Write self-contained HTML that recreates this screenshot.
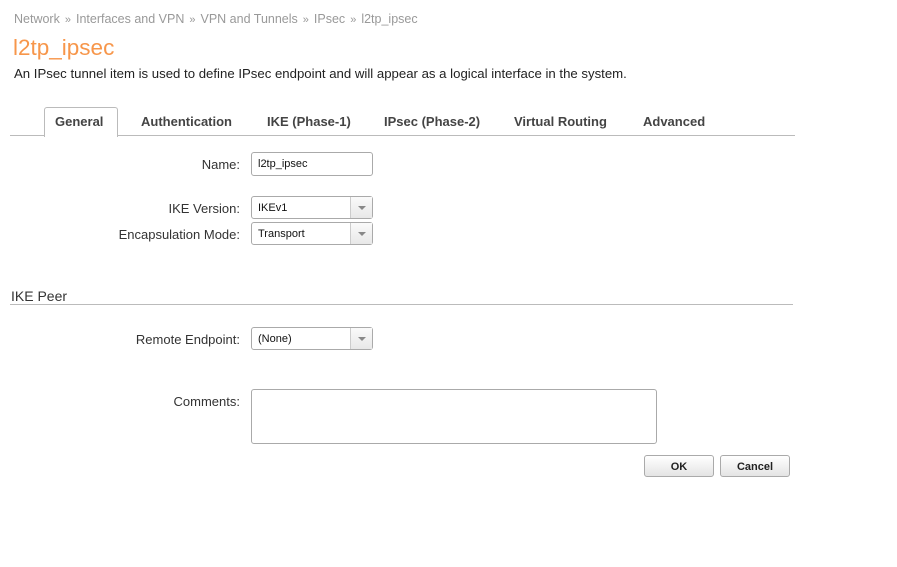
<!DOCTYPE html>
<html><head><style>
body{margin:0;width:897px;height:567px;background:#fff;font-family:"Liberation Sans",sans-serif;position:relative;overflow:hidden}
.a{position:absolute;white-space:nowrap}
.bc{top:12px;left:14px;font-size:12.5px;color:#999}
.bc span{color:#999;margin:0 5px;font-size:11px}
h1{position:absolute;margin:0;top:35px;left:13px;font-size:22.5px;font-weight:normal;color:#f7964a}
.desc{top:66px;left:14px;font-size:13.2px;color:#222}
.tabs{position:absolute;top:135px;left:10px;width:785px;border-top:1px solid #bbb}
.tab{position:absolute;top:114px;font-size:13px;font-weight:bold;color:#444}
.gen{position:absolute;left:44px;top:107px;width:72px;height:29px;border:1px solid #bbb;border-bottom:none;border-radius:3px 3px 0 0;background:#fff}
.lbl{font-size:13px;color:#333;text-align:right;width:240px;left:0}
.in{position:absolute;border:1px solid #aaa;border-radius:3px;background:#fff;font-size:11px;color:#111;box-sizing:border-box;padding-left:6px;line-height:22px}
.sel{height:23px;width:122px;left:251px}
.sel:after{content:"";position:absolute;right:0;top:0;width:21px;height:21px;border-left:1px solid #ccc;background:linear-gradient(#fafafa,#e8e8e8)}
.sel i{position:absolute;right:6px;top:9px;border:4px solid transparent;border-top:4px solid #888;z-index:2}
.btn{position:absolute;top:455px;height:22px;border:1px solid #aaa;border-radius:3px;background:linear-gradient(#fff,#e4e4e4);font-size:11px;font-weight:bold;text-align:center;line-height:22px;color:#222;box-sizing:border-box}
</style></head><body>
<div class="a bc">Network<span>»</span>Interfaces and VPN<span>»</span>VPN and Tunnels<span>»</span>IPsec<span>»</span>l2tp_ipsec</div>
<h1>l2tp_ipsec</h1>
<div class="a desc">An IPsec tunnel item is used to define IPsec endpoint and will appear as a logical interface in the system.</div>
<div class="tabs"></div>
<div class="gen"></div>
<div class="a tab" style="left:55px">General</div>
<div class="a tab" style="left:141px">Authentication</div>
<div class="a tab" style="left:267px">IKE (Phase-1)</div>
<div class="a tab" style="left:384px">IPsec (Phase-2)</div>
<div class="a tab" style="left:514px">Virtual Routing</div>
<div class="a tab" style="left:643px">Advanced</div>
<div class="a lbl" style="top:157px">Name:</div>
<div class="in" style="left:251px;top:152px;width:122px;height:24px;line-height:23px">l2tp_ipsec</div>
<div class="a lbl" style="top:201px">IKE Version:</div>
<div class="in sel" style="top:196px">IKEv1<i></i></div>
<div class="a lbl" style="top:227px">Encapsulation Mode:</div>
<div class="in sel" style="top:222px">Transport<i></i></div>
<div class="a" style="top:288px;left:11px;font-size:14px;color:#333">IKE Peer</div>
<div style="position:absolute;top:304px;left:10px;width:783px;border-top:1px solid #bbb"></div>
<div class="a lbl" style="top:332px">Remote Endpoint:</div>
<div class="in sel" style="top:327px">(None)<i></i></div>
<div class="a lbl" style="top:394px">Comments:</div>
<div class="in" style="left:251px;top:389px;width:406px;height:55px"></div>
<div class="btn" style="left:644px;width:70px">OK</div>
<div class="btn" style="left:720px;width:70px">Cancel</div>
</body></html>
